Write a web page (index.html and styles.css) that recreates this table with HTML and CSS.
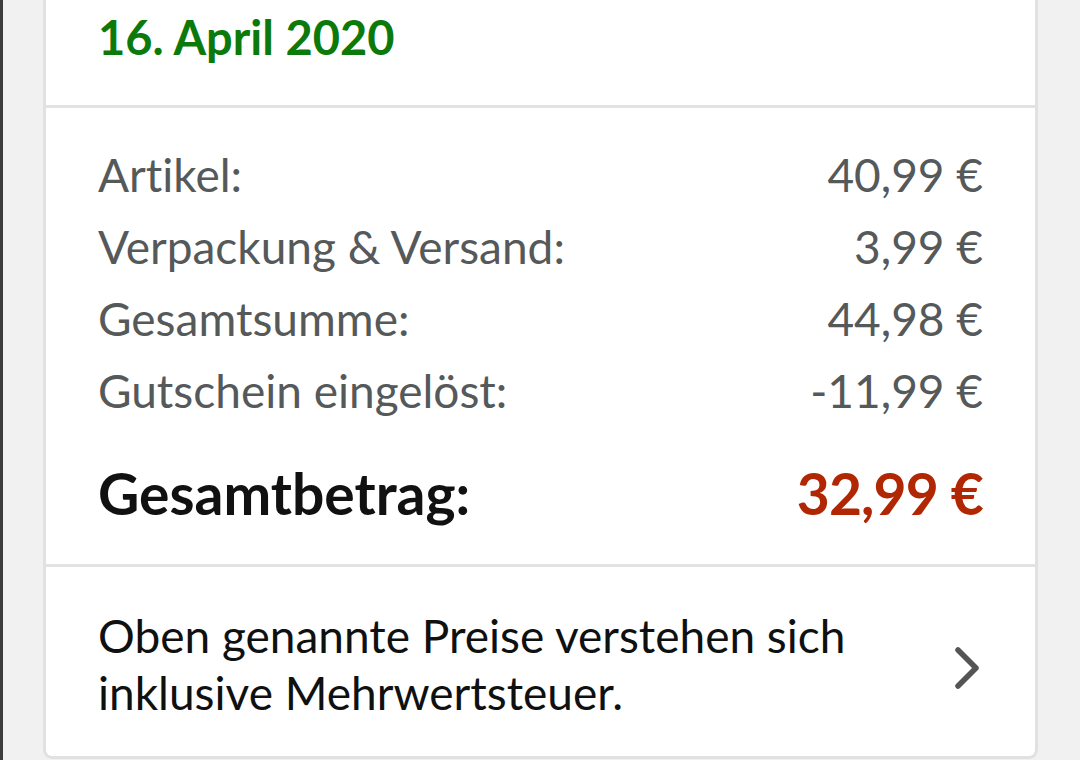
FILE: index.html
```html
<!DOCTYPE html>
<html lang="de">
<head>
<meta charset="utf-8">
<title>Bestellübersicht</title>
<link rel="stylesheet" href="styles.css">
</head>
<body>
<main class="card">
  <header class="card-head">
    <h1 class="date">16. April 2020</h1>
  </header>
  <section class="summary">
    <div class="row"><span class="label">Artikel:</span><span class="value">40,99 €</span></div>
    <div class="row"><span class="label">Verpackung &amp; Versand:</span><span class="value">3,99 €</span></div>
    <div class="row"><span class="label">Gesamtsumme:</span><span class="value">44,98 €</span></div>
    <div class="row"><span class="label">Gutschein eingelöst:</span><span class="value">-11,99 €</span></div>
    <div class="row total"><span class="label">Gesamtbetrag:</span><span class="value">32,99 €</span></div>
  </section>
  <a class="vat" href="#">
    <p class="vat-text">Oben genannte Preise verstehen sich inklusive Mehrwertsteuer.</p>
    <svg class="chevron" width="28" height="42" viewBox="0 0 28 42" aria-hidden="true">
      <polyline points="5,3 23,21 5,39" fill="none" stroke="#555" stroke-width="5.5" stroke-linecap="round" stroke-linejoin="round"/>
    </svg>
  </a>
</main>
</body>
</html>
```
FILE: styles.css
```css
html, body {
  margin: 0;
  padding: 0;
}
body {
  background: #f1f1f1;
  border-left: 3px solid #3d3d3d;
  height: 760px;
  box-sizing: border-box;
  font-family: Lato, "Noto Sans", sans-serif;
  font-variant-ligatures: none;
  overflow: hidden;
}
.card {
  display: block;
  margin: 0 42px 0 40px;
  background: #fff;
  border: 3px solid #e1e1e1;
  border-top: none;
  border-radius: 0 0 9px 9px;
  height: 759px;
  box-sizing: border-box;
}
.card-head {
  padding: 10px 52px 41px 52px;
  border-bottom: 3px solid #e3e3e3;
}
.date {
  margin: 0;
  font-size: 47px;
  line-height: 54px;
  font-weight: 700;
  color: #0b7a0b;
}
.summary {
  padding: 31px 52px 31px 52px;
  border-bottom: 3px solid #e3e3e3;
}
.row {
  display: flex;
  justify-content: space-between;
  align-items: baseline;
  font-size: 46px;
  line-height: 72px;
  color: #565959;
}
.row.total {
  margin-top: 26px;
  font-size: 57px;
  line-height: 80px;
  font-weight: 700;
  color: #111;
}
.row.total .value {
  color: #b12704;
  letter-spacing: -0.9px;
}
.vat {
  display: flex;
  align-items: center;
  justify-content: space-between;
  padding: 40px 54px 30px 52px;
  text-decoration: none;
  color: #0f1111;
}
.vat-text {
  margin: 0;
  font-size: 46px;
  line-height: 57px;
  max-width: 780px;
}
.chevron {
  flex: none;
  margin-top: 8px;
}
```
